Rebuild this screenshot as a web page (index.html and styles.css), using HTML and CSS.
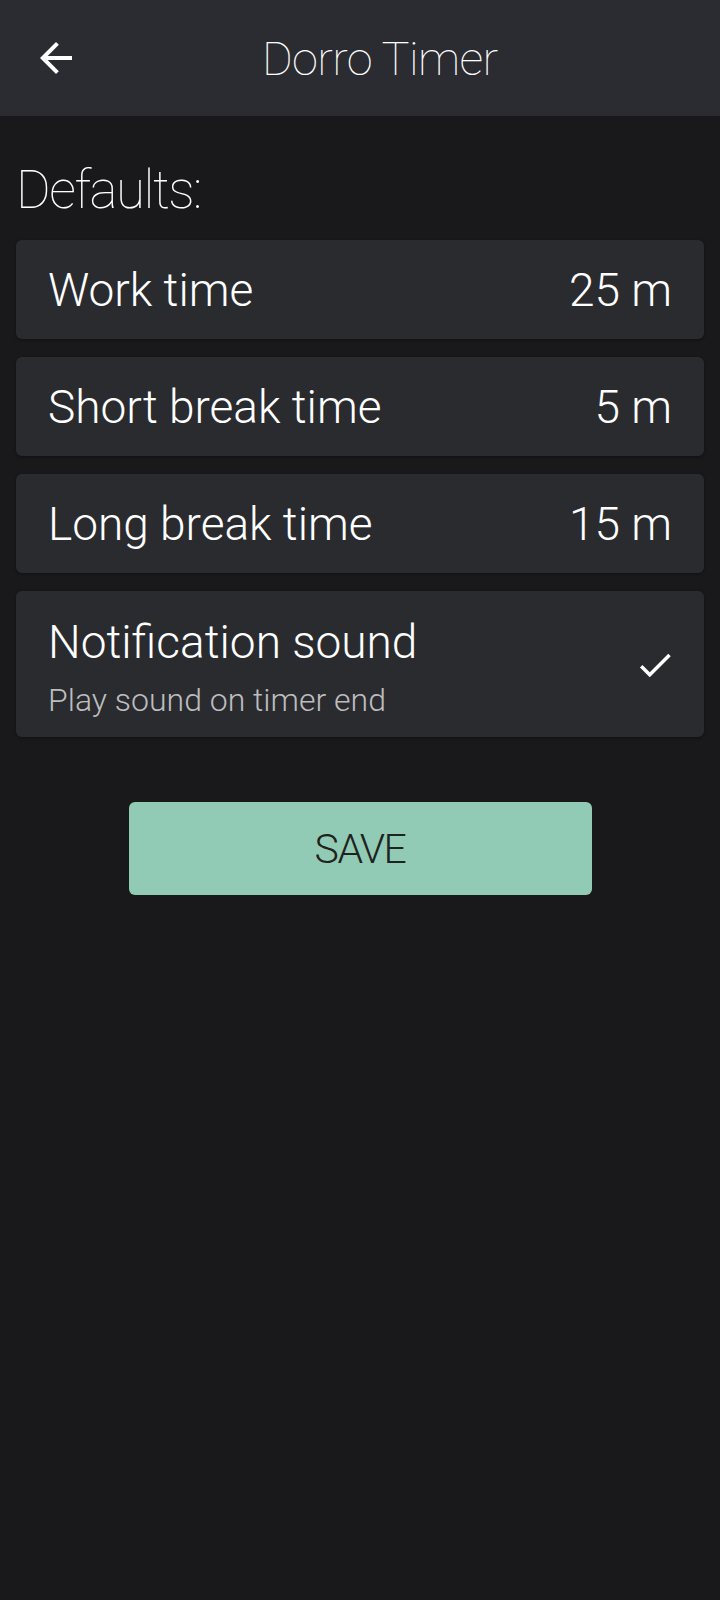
FILE: index.html
```html
<!DOCTYPE html>
<html lang="en">
<head>
<meta charset="UTF-8">
<meta name="viewport" content="width=device-width, initial-scale=1.0">
<title>Dorro Timer</title>
<link rel="stylesheet" href="styles.css">
</head>
<body>
<header class="topbar">
  <button class="back" aria-label="Back">
    <svg viewBox="0 0 24 24" width="48" height="48"><path d="M20 11H7.83l5.59-5.59L12 4l-8 8 8 8 1.41-1.41L7.83 13H20v-2z" fill="#fff"/></svg>
  </button>
  <h1 class="title">Dorro Timer</h1>
</header>

<main class="settings">
  <h2 class="section">Defaults:</h2>

  <div class="card">
    <span class="label">Work time</span>
    <span class="value">25 m</span>
  </div>
  <div class="card">
    <span class="label">Short break time</span>
    <span class="value">5 m</span>
  </div>
  <div class="card">
    <span class="label">Long break time</span>
    <span class="value">15 m</span>
  </div>
  <div class="card card-toggle">
    <div class="toggle-text">
      <span class="label">Notification sound</span>
      <span class="hint">Play sound on timer end</span>
    </div>
    <svg class="check" viewBox="0 0 24 24" width="42" height="42"><path d="M9 16.17L4.83 12l-1.42 1.41L9 19 21 7l-1.41-1.41z" fill="#fff"/></svg>
  </div>

  <button class="save">SAVE</button>
</main>
</body>
</html>
```

FILE: styles.css
```css
html, body { margin: 0; padding: 0; }
body { background-color: #19191b; color: #fff; font-family: Roboto, "Noto Sans", sans-serif; min-height: 1600px; }

.topbar { height: 116px; background-color: #2b2c31; display: flex; align-items: center; padding-left: 32px; }
.back { width: 48px; height: 48px; padding: 0; border: none; background: none; display: flex; }
.title { margin: 0 0 0 182px; font-size: 47px; font-weight: 100; letter-spacing: -0.7px; line-height: 1; color: #fff; }

.settings { padding: 0 16px; display: flex; flex-direction: column; gap: 18px; }
.section { margin: 48px 0 5px; font-size: 53px; font-weight: 100; letter-spacing: -1.5px; line-height: 1; }

.card { height: 99px; padding: 0 32px; background-color: #2a2b2f; border-radius: 6px; display: flex; align-items: center; justify-content: space-between; box-shadow: 0 1px 3px rgba(0, 0, 0, 0.35); }
.label, .value { font-size: 46px; font-weight: 300; line-height: 1; }

.card-toggle { height: auto; padding: 28px 28px 21px 32px; }
.toggle-text { display: flex; flex-direction: column; gap: 19px; }
.hint { font-size: 32px; font-weight: 300; line-height: 1; color: #bdbdbe; }
.check { margin-bottom: 5px; }

.save { align-self: center; width: 463px; height: 93px; margin-top: 47px; border: none; border-radius: 6px; background-color: #92cbb5; color: #1e2320; font-family: inherit; font-size: 41px; font-weight: 300; letter-spacing: -1.5px; }
```
